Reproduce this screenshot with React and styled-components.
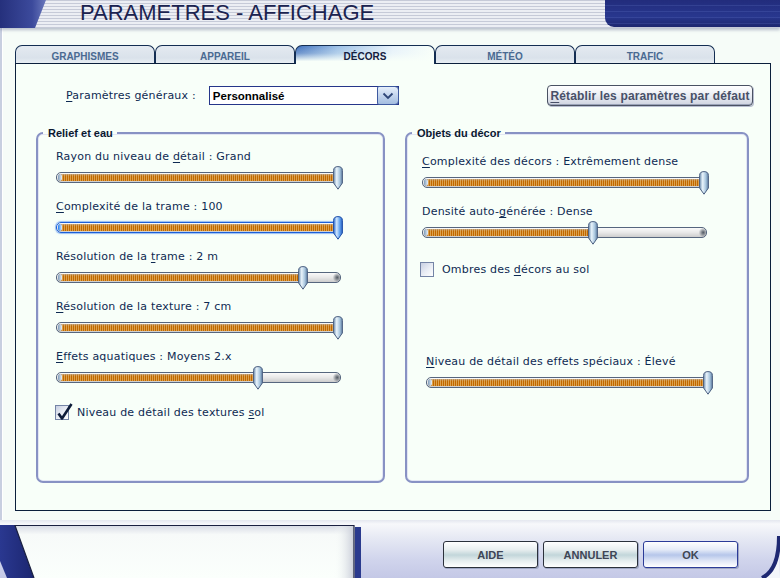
import React, { useId } from 'react';
import styled, { createGlobalStyle } from 'styled-components';

const GlobalStyle = createGlobalStyle`
  html, body { margin: 0; padding: 0; background: #f6fcf8; }
  body { width: 780px; height: 578px; overflow: hidden; font-family: "DejaVu Sans", Verdana, sans-serif; }
  *, *::before, *::after { box-sizing: border-box; }
`;

const Window = styled.div`
  width: 780px;
  height: 578px;
  display: flex;
  flex-direction: column;
  background: #f6fcf8;
  overflow: hidden;
`;

/* ---------- Header ---------- */
const Header = styled.header`
  position: relative;
  z-index: 3;
  flex: none;
  height: 28px;
  display: flex;
  background: repeating-linear-gradient(to bottom, #c6cad8 0px, #c6cad8 1px, #eceef4 1px, #eceef4 3px);
  box-shadow: 0 2px 3px rgba(70, 80, 120, 0.35);
`;

const HeaderLeft = styled.svg`
  flex: none;
  display: block;
`;

const Title = styled.h1`
  flex: 1;
  margin: 0;
  padding-left: 34px;
  font: normal 22px/25px "Liberation Sans", Arial, sans-serif;
  color: #1b2350;
  white-space: nowrap;
`;

const HeaderRight = styled.div`
  flex: none;
  width: 175px;
  height: 27px;
  border-bottom-left-radius: 9px;
  background:
    repeating-linear-gradient(to bottom, rgba(255,255,255,0) 0px, rgba(255,255,255,0) 5px, rgba(120,140,220,0.18) 5px, rgba(120,140,220,0.18) 6px),
    linear-gradient(to bottom, #222c7c, #28378e 60%, #1d276f);
`;

/* ---------- Body ---------- */
const Body = styled.main`
  flex: none;
  height: 492px;
  padding: 17px 9px 9px 15px;
  display: flex;
  flex-direction: column;
  box-shadow: inset 2px 0 0 #c8cfe0, inset 3px 0 0 #ffffff;
`;

const TabBar = styled.nav`
  flex: none;
  height: 18px;
  display: flex;
  align-items: flex-start;
`;

const Tab = styled.div`
  position: relative;
  z-index: ${p => (p.$active ? 2 : 0)};
  flex: none;
  width: 140px;
  height: ${p => (p.$active ? 19 : 18)}px;
  padding-top: ${p => (p.$active ? 3 : 4)}px;
  display: flex;
  align-items: center;
  justify-content: center;
  border: 1px solid #132d52;
  border-bottom: none;
  border-radius: 7px 7px 0 0;
  font: bold 10px/1 "Liberation Sans", Arial, sans-serif;
  color: ${p => (p.$active ? '#142040' : '#4a6a92')};
  background: ${p =>
    p.$active
      ? 'linear-gradient(to bottom, rgba(248,255,249,0) 0%, rgba(248,255,249,0.25) 40%, #f8fff9 85%), linear-gradient(to right, #3f70bd 0%, #9cc0e6 30%, #e6f1fa 70%, #f8fff9 100%)'
      : 'linear-gradient(to bottom, #e4eaf1 0%, #dae2eb 70%, #e8eef3 100%)'};
`;

const Panel = styled.section`
  position: relative;
  z-index: 1;
  flex: none;
  height: 448px;
  border: 1px solid #0b1f3c;
  background: #f8fff9;
  padding: 21px 21px 0 20px;
  display: flex;
  flex-direction: column;
`;

const TopRow = styled.div`
  height: 21px;
  display: flex;
  align-items: center;
`;

const TextLabel = styled.span`
  font-size: 11px;
  line-height: 14px;
  letter-spacing: 0.2px;
  color: #0e2a52;
  white-space: nowrap;
  font-family: "DejaVu Sans", Verdana, sans-serif;
  margin-left: ${p => p.$ml || 0}px;
  u { text-decoration: underline; text-underline-offset: 2px; }
`;

const Select = styled.div`
  margin-left: 13px;
  width: 190px;
  height: 19px;
  display: flex;
  align-items: stretch;
  background: #ffffff;
  border: 1px solid #26368a;
`;

const SelectValue = styled.span`
  flex: 1;
  padding-left: 3px;
  display: flex;
  align-items: center;
  font: bold 11.5px "Liberation Sans", Arial, sans-serif;
  color: #000;
`;

const SelectButton = styled.span`
  flex: none;
  width: 22px;
  margin: -1px -1px -1px 0;
  display: flex;
  align-items: center;
  justify-content: center;
  border: 1px solid #3e5aa0;
  border-radius: 2px 4px 4px 2px;
  background: linear-gradient(to bottom, #e6effb 0%, #c3d5ee 50%, #a4bde0 100%);
`;

const ResetButton = styled.button`
  margin-left: auto;
  margin-right: -4px;
  width: 206px;
  height: 21px;
  padding: 0;
  border: 1px solid #4a5263;
  border-radius: 4px;
  background: linear-gradient(to bottom, #ffffff 0%, #eceff5 45%, #cfd4e0 100%);
  box-shadow: inset 0 -1px 0 #9aa2b8, 1px 1px 0 #b8bed0;
  font: bold 12px "Liberation Sans", Arial, sans-serif;
  letter-spacing: 0.15px;
  color: #485068;
  white-space: nowrap;
  u { text-decoration: underline; text-underline-offset: 2px; }
`;

const Groups = styled.div`
  margin-top: 20px;
  display: grid;
  grid-template-columns: 349px 344px;
  column-gap: 20px;
`;

const Group = styled.fieldset`
  margin: 0;
  min-width: 0;
  height: 357px;
  padding: 0;
  border: 2px solid #8892c4;
  border-radius: 7px;
  box-shadow: inset 0 0 0 1px #e2e6f4;
`;

const Legend = styled.legend`
  margin-left: 5px;
  padding: 0 4px 0 5px;
  font: bold 11px/14px "Liberation Sans", Arial, sans-serif;
  color: #0a1830;
`;

const GroupBody = styled.div`
  padding: ${p => p.$pt}px 0 0 ${p => p.$pl}px;
  display: flex;
  flex-direction: column;
  align-items: flex-start;
`;

const SliderRow = styled.div`
  display: flex;
  flex-direction: column;
  margin-top: ${p => p.$mt || 0}px;
  margin-left: ${p => p.$ml || 0}px;
  margin-bottom: 11px;
`;

const SliderBox = styled.div`
  position: relative;
  margin-top: 3px;
  width: 287px;
  height: 22px;
`;

const Track = styled.div`
  position: absolute;
  left: 0;
  right: 2px;
  top: 5px;
  height: 11px;
  border: 1px solid ${p => (p.$focused ? '#1d5fd8' : '#56667e')};
  border-radius: 5px;
  background: linear-gradient(to bottom, #fafafa 0%, #e8e8e8 50%, #cdcdcd 100%);
  box-shadow: ${p => (p.$focused ? '0 0 0 1px rgba(90,150,240,0.45), 0 0 2px 1px rgba(120,170,240,0.35)' : 'none')};
  overflow: hidden;
  &::after {
    content: '';
    position: absolute;
    right: 0;
    top: 0;
    width: 7px;
    height: 100%;
    background: radial-gradient(ellipse at 60% 50%, #505862 0%, rgba(80,88,98,0.4) 45%, rgba(80,88,98,0) 75%);
  }
`;

const TrackFill = styled.div`
  position: absolute;
  left: 2px;
  top: 1px;
  bottom: 1px;
  background:
    linear-gradient(to bottom, rgba(190,190,190,0.6) 0px, rgba(190,190,190,0) 2px),
    repeating-linear-gradient(to right, #c06800 0px, #c06800 1px, #dda24e 1px, #dda24e 2px);
`;

const TrackCap = styled.div`
  position: absolute;
  left: 1px;
  top: 1px;
  width: 4px;
  height: 7px;
  border-radius: 2px;
  background: ${p =>
    p.$focused
      ? 'linear-gradient(to right, #1f7df0, #dff0ff)'
      : 'linear-gradient(to right, #7f9cba, #e8f0f8)'};
`;

const ThumbSvg = styled.svg`
  position: absolute;
  top: -1px;
  display: block;
`;

const CheckRow = styled.label`
  display: flex;
  align-items: center;
  gap: 8px;
  margin-top: ${p => p.$mt || 0}px;
  margin-left: ${p => p.$ml || 0}px;
`;

const CheckBox = styled.span`
  position: relative;
  flex: none;
  width: 14px;
  height: 15px;
  border: 1px solid #7484a6;
  background: linear-gradient(135deg, #c8d0e2 0%, #e8ecf4 50%, #ffffff 100%);
`;

const CheckMark = styled.svg`
  position: absolute;
  left: 0px;
  top: -4px;
  display: block;
`;

/* ---------- Footer ---------- */
const Footer = styled.footer`
  flex: none;
  height: 58px;
  display: flex;
  align-items: flex-start;
  background: linear-gradient(to bottom, #e4e7ef 0px, #f7f8fb 4px, #e6e9f4 18px, #d0d4ec 40px, #c4c8e6 58px);
`;

const FooterSlot = styled.svg`
  flex: none;
  display: block;
  margin-top: 5px;
`;

const ButtonRow = styled.div`
  flex: none;
  margin-top: 21px;
  margin-left: 81px;
  display: flex;
  gap: 5px;
`;

const FooterButton = styled.button`
  width: 95px;
  height: 27px;
  padding: 0;
  border: 1px solid ${p => (p.$default ? '#2c3c98' : '#2b313b')};
  border-radius: 3px;
  background: ${p =>
    p.$default
      ? 'linear-gradient(to bottom, #ffffff 0%, #e6ecf8 30%, #b6c6ea 52%, #dfe6f6 75%, #ffffff 100%)'
      : 'linear-gradient(to bottom, #ffffff 0%, #e9eff0 30%, #c2d6da 52%, #e6eeef 75%, #ffffff 100%)'};
  box-shadow: 1px 1px 0 #9ea6c4;
  font: bold 11px "Liberation Sans", Arial, sans-serif;
  color: #3e4656;
`;

const FooterCorner = styled.svg`
  flex: none;
  display: block;
  margin-left: auto;
`;

/* ---------- Parts ---------- */
function Thumb({ focused, left }) {
  const id = useId().replace(/:/g, '');
  const stops = focused
    ? ['#2f6fd0', '#cfe6ff', '#62a2ee', '#2a62c0']
    : ['#7594b4', '#e9f4fb', '#a9c6de', '#5f7ea2'];
  return (
    <ThumbSvg width="10" height="24" viewBox="0 0 10 24" style={{ left }}>
      <defs>
        <linearGradient id={id} x1="0" x2="1" y1="0" y2="0">
          <stop offset="0" stopColor={stops[0]} />
          <stop offset="0.35" stopColor={stops[1]} />
          <stop offset="0.7" stopColor={stops[2]} />
          <stop offset="1" stopColor={stops[3]} />
        </linearGradient>
      </defs>
      <path
        d="M0.6 4.5 Q0.6 0.6 5 0.6 Q9.4 0.6 9.4 4.5 L9.4 17 L5 23.2 L0.6 17 Z"
        fill={`url(#${id})`}
        stroke={focused ? '#1f4fa8' : '#4b5f80'}
        strokeWidth="1"
      />
    </ThumbSvg>
  );
}

function Slider({ value, focused }) {
  const range = 277;
  const thumbLeft = Math.round(value * range);
  return (
    <SliderBox>
      <Track $focused={focused}>
        <TrackFill style={{ width: thumbLeft + 3 }} />
        <TrackCap $focused={focused} />
      </Track>
      <Thumb focused={focused} left={thumbLeft} />
    </SliderBox>
  );
}

function SliderField({ label, value, focused, mt, ml }) {
  return (
    <SliderRow $mt={mt} $ml={ml}>
      <TextLabel>{label}</TextLabel>
      <Slider value={value} focused={focused} />
    </SliderRow>
  );
}

function Check({ checked, label, mt, ml }) {
  return (
    <CheckRow $mt={mt} $ml={ml}>
      <CheckBox>
        {checked && (
          <CheckMark width="17" height="19" viewBox="0 0 17 19">
            <path d="M2.5 11.5 L6 16.5 L15.5 2" fill="none" stroke="#0e1c3a" strokeWidth="2.6" strokeLinejoin="round" />
          </CheckMark>
        )}
      </CheckBox>
      <TextLabel>{label}</TextLabel>
    </CheckRow>
  );
}

const tabs = ['GRAPHISMES', 'APPAREIL', 'DÉCORS', 'MÉTÉO', 'TRAFIC'];

const leftSliders = [
  { label: <>Rayon du niveau de <u>d</u>étail : Grand</>, value: 1 },
  { label: <><u>C</u>omplexité de la trame : 100</>, value: 1, focused: true },
  { label: <>Résolution de la <u>t</u>rame : 2 m</>, value: 0.874 },
  { label: <><u>R</u>ésolution de la texture : 7 cm</>, value: 1 },
  { label: <><u>E</u>ffets aquatiques : Moyens 2.x</>, value: 0.712 },
];

const rightSliders = [
  { label: <><u>C</u>omplexité des décors : Extrêmement dense</>, value: 1 },
  { label: <>Densité auto-<u>g</u>énérée : Dense</>, value: 0.6 },
];

export default function App() {
  return (
    <Window>
      <GlobalStyle />
      <Header>
        <HeaderLeft width="46" height="28" viewBox="0 0 46 28">
          <defs>
            <linearGradient id="hdrBlue" x1="0" x2="1" y1="0" y2="0">
              <stop offset="0" stopColor="#25307c" />
              <stop offset="0.7" stopColor="#3c4a9c" />
              <stop offset="1" stopColor="#6a78bc" />
            </linearGradient>
          </defs>
          <polygon points="0,0 46,0 35,28 0,28" fill="url(#hdrBlue)" />
        </HeaderLeft>
        <Title>PARAMETRES - AFFICHAGE</Title>
        <HeaderRight />
      </Header>

      <Body>
        <TabBar>
          {tabs.map((t, i) => (
            <Tab key={t} $active={i === 2}>{t}</Tab>
          ))}
        </TabBar>
        <Panel>
          <TopRow>
            <TextLabel $ml={30}><u>P</u>aramètres généraux :</TextLabel>
            <Select>
              <SelectValue>Personnalisé</SelectValue>
              <SelectButton>
                <svg width="12" height="8" viewBox="0 0 12 8">
                  <polyline points="1.5,1.5 6,6 10.5,1.5" fill="none" stroke="#2e4678" strokeWidth="1.8" />
                </svg>
              </SelectButton>
            </Select>
            <ResetButton><u>R</u>établir les paramètres par défaut</ResetButton>
          </TopRow>

          <Groups>
            <Group>
              <Legend>Relief et eau</Legend>
              <GroupBody $pt={10} $pl={18}>
                {leftSliders.map((s, i) => (
                  <SliderField key={i} {...s} />
                ))}
                <Check checked mt={5} ml={-1} label={<>Niveau de détail des textures <u>s</u>ol</>} />
              </GroupBody>
            </Group>
            <Group>
              <Legend>Objets du décor</Legend>
              <GroupBody $pt={15} $pl={15}>
                {rightSliders.map((s, i) => (
                  <SliderField key={i} {...s} />
                ))}
                <Check mt={7} ml={-2} label={<>Ombres des <u>d</u>écors au sol</>} />
                <SliderField
                  mt={78}
                  ml={4}
                  value={1}
                  label={<><u>N</u>iveau de détail des effets spéciaux : Élevé</>}
                />
              </GroupBody>
            </Group>
          </Groups>
        </Panel>
      </Body>

      <Footer>
        <FooterSlot width="362" height="53" viewBox="0 0 362 53">
          <defs>
            <linearGradient id="wellFill" x1="0" x2="0" y1="0" y2="1">
              <stop offset="0" stopColor="#d6d9e4" />
              <stop offset="0.18" stopColor="#f7faf9" />
              <stop offset="1" stopColor="#fbfffc" />
            </linearGradient>
            <linearGradient id="wellEdge" x1="0" x2="1" y1="0" y2="0">
              <stop offset="0" stopColor="#fbfffc" stopOpacity="0" />
              <stop offset="0.94" stopColor="#fbfffc" stopOpacity="0" />
              <stop offset="1" stopColor="#c8ccd8" />
            </linearGradient>
            <linearGradient id="navySlant" x1="0" x2="1" y1="0" y2="0">
              <stop offset="0" stopColor="#2a3890" />
              <stop offset="1" stopColor="#1c2670" />
            </linearGradient>
          </defs>
          <polygon points="0,0 15,0 34,53 7,53 0,36" fill="url(#navySlant)" />
          <polygon points="15,0 354,0 354,53 34,53" fill="url(#wellFill)" />
          <polygon points="15,0 354,0 354,53 34,53" fill="url(#wellEdge)" />
          <polyline points="34,53 15,0.5 354,0.5 354,53" fill="none" stroke="#1a2040" strokeWidth="1.2" />
          <rect x="355" y="2" width="6" height="51" fill="#2a3a8e" />
        </FooterSlot>
        <ButtonRow>
          <FooterButton>AIDE</FooterButton>
          <FooterButton>ANNULER</FooterButton>
          <FooterButton $default>OK</FooterButton>
        </ButtonRow>
        <FooterCorner width="20" height="58" viewBox="0 0 20 58">
          <path d="M19 16 Q19 50 2 58 L20 58 Z" fill="#f4f6fb" />
          <path d="M19 16 Q19 50 2 58" fill="none" stroke="#1e2872" strokeWidth="4" />
        </FooterCorner>
      </Footer>
    </Window>
  );
}
